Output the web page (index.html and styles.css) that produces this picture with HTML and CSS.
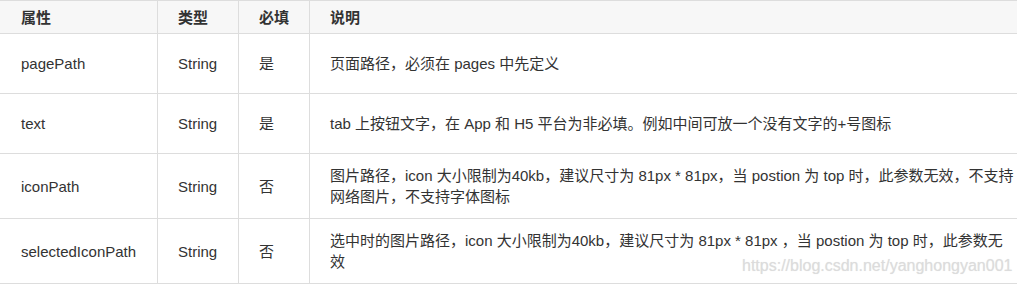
FILE: index.html
```html
<!DOCTYPE html>
<html lang="zh-CN">
<head>
<meta charset="utf-8">
<title>tabBar list</title>
<link rel="stylesheet" href="styles.css">
</head>
<body>
<div class="wrap">
  <table class="props">
    <colgroup>
      <col class="c-name">
      <col class="c-type">
      <col class="c-req">
      <col class="c-desc">
    </colgroup>
    <thead>
      <tr><th>属性</th><th>类型</th><th>必填</th><th>说明</th></tr>
    </thead>
    <tbody>
      <tr><td>pagePath</td><td>String</td><td>是</td><td>页面路径，必须在 pages 中先定义</td></tr>
      <tr><td>text</td><td>String</td><td>是</td><td>tab 上按钮文字，在 App 和 H5 平台为非必填。例如中间可放一个没有文字的+号图标</td></tr>
      <tr><td>iconPath</td><td>String</td><td>否</td><td>图片路径，icon 大小限制为40kb，建议尺寸为 81px * 81px，当 postion 为 top 时，此参数无效，不支持网络图片，不支持字体图标</td></tr>
      <tr><td>selectedIconPath</td><td>String</td><td>否</td><td>选中时的图片路径，icon 大小限制为40kb，建议尺寸为 81px * 81px ，当 postion 为 top 时，此参数无效</td></tr>
    </tbody>
  </table>
  <div class="watermark">https://blog.csdn.net/yanghongyan001</div>
</div>
</body>
</html>
```

FILE: styles.css
```css
* { box-sizing: border-box; }

html, body {
  margin: 0;
  padding: 0;
  background: #fff;
}

body {
  font-family: "Liberation Sans", "Noto Sans CJK SC", sans-serif;
  font-size: 15px;
  color: #333;
}

.wrap {
  position: relative;
  width: 1017px;
  height: 284px;
  overflow: hidden;
}

.props {
  width: 1018px;
  table-layout: fixed;
  border-collapse: separate;
  border-spacing: 0;
  border-top: 1px solid #ddd;
}

.c-name { width: 158px; }
.c-type { width: 81px; }
.c-req { width: 71px; }
.c-desc { width: 708px; }

.props th,
.props td {
  border-right: 1px solid #ddd;
  border-bottom: 1px solid #ddd;
  padding: 0 10px 0 20px;
  text-align: left;
  vertical-align: middle;
  line-height: 21px;
}

.props th:first-child,
.props td:first-child {
  padding-left: 21px;
}

.props th:last-child,
.props td:last-child {
  padding-right: 3px;
}

.props th {
  height: 33px;
  background: #f7f7f7;
  font-weight: bold;
  color: #333;
}

.props td {
  height: 60px;
  padding-top: 11px;
  padding-bottom: 11px;
}

.watermark {
  position: absolute;
  left: 742px;
  top: 256px;
  font-family: "Liberation Sans", sans-serif;
  font-size: 16px;
  line-height: 20px;
  color: #dcdcdc;
  text-shadow: 0 0 1px #e6e6e6;
  white-space: nowrap;
}
```
